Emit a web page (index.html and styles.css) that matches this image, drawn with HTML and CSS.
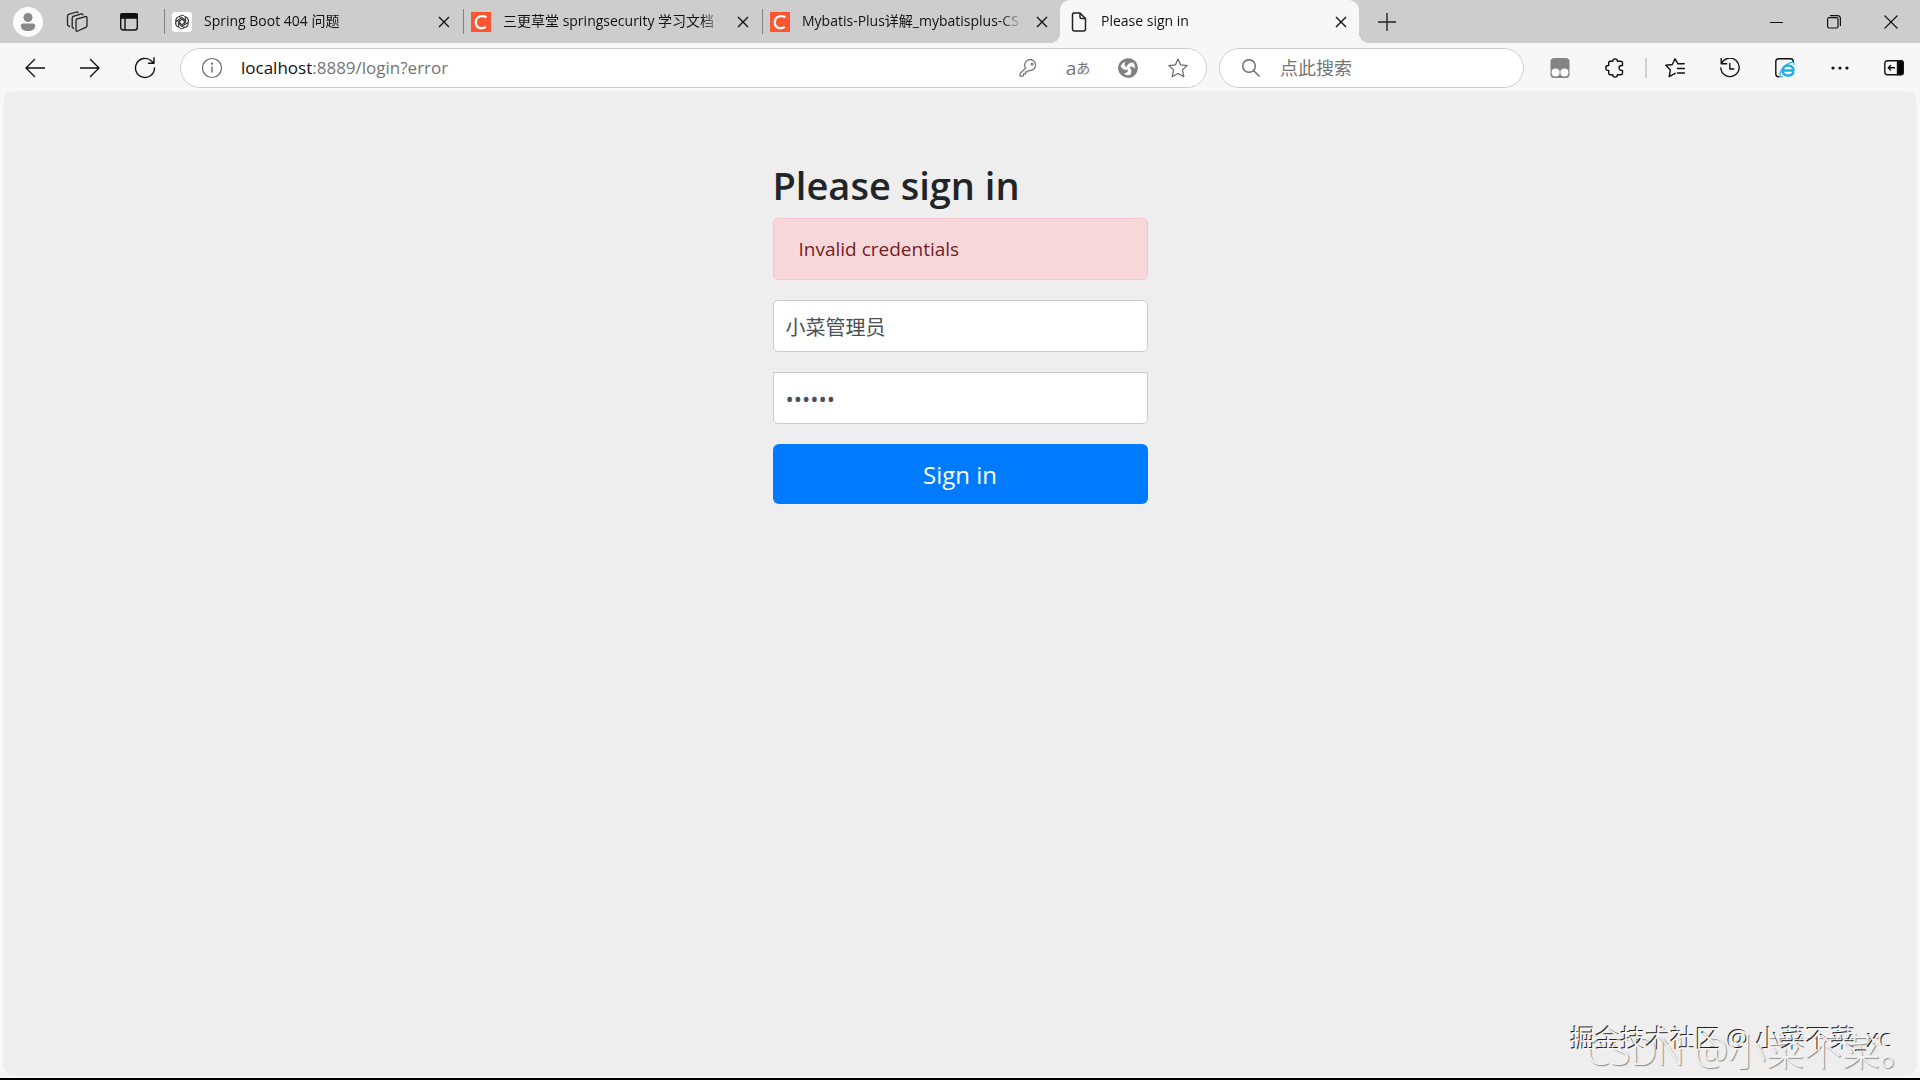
FILE: index.html
```
<!DOCTYPE html>
<html lang="zh-CN">
<head>
    <meta charset="UTF-8">
    <meta name="viewport" content="width=device-width, initial-scale=1.0">
    <title>Please sign in</title>
    <link rel="stylesheet" href="styles.css">
</head>
<body>
    <header class="tab-strip">
        <div class="strip-tools">
            <button class="profile" type="button" aria-label="Profile">
                <svg width="30" height="30" viewBox="0 0 30 30"><circle cx="15" cy="15" r="15" fill="#fbfbfb"/><circle cx="15" cy="10.500" r="4.500" fill="#8a8a8a"/><path d="M10 16.500h10q2.200 0 2.200 2.200c0 3.300-3 5.300-7.200 5.300s-7.200-2-7.200-5.300q0-2.200 2.200-2.200z" fill="#8a8a8a"/></svg>
            </button>
            <button class="strip-button" type="button" aria-label="Workspaces">
                <svg width="22" height="22" viewBox="0 0 22 22" fill="none" stroke="#222" stroke-width="1.300" stroke-linejoin="round" stroke-linecap="round"><path d="M10.500 8.200l9-2.600q1.500-.3 1.500 1.200v8q0 1.200-1.200 1.600l-8 3.600q-1.800.8-1.800-1V9.600q0-1 .5-1.400z"/><path d="M7.500 17.500l-1.300-1.200V7q0-1.200 1-1.600l8.300-2.500q1.200-.3 1.500 1"/><path d="M3.500 15.500L1.500 14V5q0-1.200 1-1.600L10.500 1q1-.3 1.500.6"/></svg>
            </button>
            <button class="strip-button" type="button" aria-label="Tab actions">
                <svg width="20" height="20" viewBox="0 0 20 20" fill="none" stroke="#111" stroke-width="1.400"><rect x="1.700" y="1.700" width="16.600" height="16.300" rx="2.500"/><path d="M2 2h16v4H2z" fill="#111"/><path d="M6 6v12"/></svg>
            </button>
        </div>

        <nav class="tabs" aria-label="Tabs">
            <div class="tab">
                <svg class="favicon" viewBox="0 0 20 20"><rect width="20" height="20" rx="3" fill="#fff"/><g fill="none" stroke="#222"><path id="petal" d="M7.200 5C8.200 2.600 13.200 2.600 13.600 6.300V10.500L9.500 12.800"/><use href="#petal" transform="rotate(60 10 10)"/><use href="#petal" transform="rotate(120 10 10)"/><use href="#petal" transform="rotate(180 10 10)"/><use href="#petal" transform="rotate(240 10 10)"/><use href="#petal" transform="rotate(300 10 10)"/></g></svg>
                <a class="tab-title" href="#">Spring Boot 404 问题</a>
                <button class="tab-close" type="button" aria-label="Close tab"><svg viewBox="0 0 12 12"><path d="M1 1l10 10M11 1L1 11"/></svg></button>
            </div>
            <div class="tab">
                <svg class="favicon" viewBox="0 0 20 20"><rect width="20" height="20" fill="#fc5531"/><path d="M15.500 5.300C12 3.200 4.800 3.500 4.800 10.500c0 6 6 6.800 10 4.600" fill="none" stroke="#fff" stroke-width="2.300"/></svg>
                <a class="tab-title" href="#">三更草堂 springsecurity 学习文档</a>
                <button class="tab-close" type="button" aria-label="Close tab"><svg viewBox="0 0 12 12"><path d="M1 1l10 10M11 1L1 11"/></svg></button>
            </div>
            <div class="tab">
                <svg class="favicon" viewBox="0 0 20 20"><rect width="20" height="20" fill="#fc5531"/><path d="M15.500 5.300C12 3.200 4.800 3.500 4.800 10.500c0 6 6 6.800 10 4.600" fill="none" stroke="#fff" stroke-width="2.300"/></svg>
                <a class="tab-title" href="#">Mybatis-Plus详解_mybatisplus-CS</a>
                <button class="tab-close" type="button" aria-label="Close tab"><svg viewBox="0 0 12 12"><path d="M1 1l10 10M11 1L1 11"/></svg></button>
            </div>
            <div class="tab tab-active">
                <svg class="favicon" viewBox="0 0 20 20"><path d="M4.500 1H11l5.500 5.500V17q0 2-2 2h-9q-2 0-2-2V3q0-2 2-2zM11 1v4q0 1.500 1.500 1.500h4" fill="none" stroke="#222" stroke-width="1.500" stroke-linejoin="round"/></svg>
                <a class="tab-title" href="#">Please sign in</a>
                <button class="tab-close" type="button" aria-label="Close tab"><svg viewBox="0 0 12 12"><path d="M1 1l10 10M11 1L1 11"/></svg></button>
            </div>
        </nav>
        <button class="new-tab" type="button" aria-label="New tab">
            <svg width="18" height="18" viewBox="0 0 18 18" stroke="#222" stroke-width="1.400"><path d="M9 0v18M0 9h18"/></svg>
        </button>

        <div class="window-controls">
            <button class="window-button" type="button" aria-label="Minimize"><svg width="14" height="14" viewBox="0 0 14 14" fill="none" stroke="#111"><path d="M0 7.500h13"/></svg></button>
            <button class="window-button" type="button" aria-label="Restore"><svg width="14" height="14" viewBox="0 0 14 14" fill="none" stroke="#111" stroke-width="1.200"><rect x=".6" y="2.600" width="10.400" height="10.400" rx="1.500"/><path d="M3 .6h7.500q2.900 0 2.900 2.900V11"/></svg></button>
            <button class="window-button" type="button" aria-label="Close"><svg width="14" height="14" viewBox="0 0 14 14" fill="none" stroke="#111" stroke-width="1.100"><path d="M.5.5l13 13M13.500.5l-13 13"/></svg></button>
        </div>
    </header>

    <div class="toolbar">
        <div class="nav-buttons">
            <button class="tool-button" type="button" aria-label="Back"><svg width="20" height="20" viewBox="0 0 20 20"><path d="M20 10H1M9.500 1.500L1 10l8.500 8.500"/></svg></button>
            <button class="tool-button" type="button" aria-label="Forward"><svg width="20" height="20" viewBox="0 0 20 20"><path d="M0 10h19M10.500 1.500L19 10l-8.500 8.500"/></svg></button>
            <button class="tool-button" type="button" aria-label="Reload"><svg width="22" height="22" viewBox="0 0 22 22"><path d="M20.500 11A9.500 9.500 0 1 1 17.500 4l2 2M20 .8V6.300H14.500"/></svg></button>
        </div>

        <div class="address-bar">
            <svg class="info-icon" viewBox="0 0 22 22" fill="none" stroke="#666" stroke-width="1.200"><circle cx="11" cy="11" r="9.500"/><path d="M11 9.500v6" stroke-width="1.400"/><circle cx="11" cy="6.700" r=".5" fill="#666"/></svg>
            <p class="url"><span class="host">localhost</span>:8889/login?error</p>
            <button class="bar-button" type="button" aria-label="Saved passwords"><svg width="18" height="18" viewBox="0 0 18 18" fill="none" stroke="#767676" stroke-width="1.200" stroke-linejoin="round"><path d="M6.600 9.200A5.500 5.500 0 1 1 9.800 11.400L8.300 12.800H6.500v2H4.500v1.700l-.8.700H1V14.500z"/><circle cx="13.200" cy="5" r="1"/></svg></button>
            <button class="bar-button translate" type="button" aria-label="Translate">a<span class="kana">あ</span></button>
            <button class="bar-button" type="button" aria-label="Extension"><svg width="20" height="20" viewBox="0 0 20 20" fill="#808080"><path id="blade" d="M1.800 4.600C5.500-1.200 15-1.600 18.800 5.200 14.500 3.800 9.800 4.300 8.600 9.200 6.300 8 6 5.800 7.500 3.900 5 4.300 3.400 6 2.900 8.600 1.900 7.600 1.500 6.200 1.800 4.600z"/><use href="#blade" transform="rotate(120 10 10)"/><use href="#blade" transform="rotate(240 10 10)"/></svg></button>
            <button class="bar-button" type="button" aria-label="Add to favorites"><svg width="20" height="20" viewBox="0 0 20 20" fill="none" stroke="#666" stroke-width="1.200" stroke-linejoin="round"><path d="M10 1l2.700 5.900 6.500.7-4.800 4.300 1.400 6.800L10 15.500l-5.800 3.200 1.400-6.800L.8 7.600l6.500-.7z"/></svg></button>
        </div>

        <div class="search-bar">
            <svg class="search-icon" viewBox="0 0 18 18" fill="none" stroke="#666" stroke-width="1.400"><circle cx="7" cy="7" r="6.300"/><path d="M11.500 11.500l6 6"/></svg>
            <input class="search-input" type="text" placeholder="点此搜索" aria-label="Search">
        </div>

        <div class="extensions">
            <button class="tool-button" type="button" aria-label="Tampermonkey"><svg width="20" height="20" viewBox="0 0 20 20" class="solid"><rect x=".5" width="19" height="20" rx="3.500" fill="#858585"/><circle cx="5.600" cy="14.600" r="4" fill="#fff"/><circle cx="14.400" cy="14.600" r="4" fill="#fff"/></svg></button>
            <button class="tool-button" type="button" aria-label="Extensions"><svg width="20" height="20" viewBox="0 0 20 20"><path d="M5.200 3.200h2.600a2.300 2.300 0 0 1 4.600 0h3.600q1.500 0 1.500 1.500v2.800h-1a2.400 2.400 0 0 0 0 4.900h1v2.900q0 1.500-1.500 1.500h-3.600a2.300 2.300 0 0 1-4.600 0H5.200q-1.500 0-1.500-1.500v-2.900h-.5a2.400 2.400 0 0 1 0-4.900h.5V4.700q0-1.500 1.500-1.500z"/></svg></button>
        </div>
        <div class="browser-tools">
            <button class="tool-button" type="button" aria-label="Favorites"><svg width="20" height="20" viewBox="0 0 20 20"><path d="M19.200 5.800h-6.200L10 .8 7.300 6.500.8 7.300l4.600 4.600-1.200 6.700 6-3.200M12.500 10.500h7M12.500 15h7"/></svg></button>
            <button class="tool-button" type="button" aria-label="History"><svg width="20" height="20" viewBox="0 0 20 20"><path d="M1.500 5.800A9.200 9.200 0 1 1 .8 10M1.200.5v5.300h5.500M9.800 5.500V11h4"/></svg></button>
            <button class="tool-button" type="button" aria-label="IE mode"><svg width="20" height="20" viewBox="0 0 20 20"><path d="M4 18.800H3.500q-2.700 0-2.700-2.700V3.500Q.8.800 3.500.8h12q2.700 0 2.700 2.700"/><path d="M18.200 14.800c-2 4.200-10.400 3.700-10.400-2.100 0-6.700 10.700-6.900 10.700-.1H9.500" stroke="#23aee5" stroke-width="2.500"/><path d="M7.500 18.800c-4.500 1.500-3-7 3.500-11.800 3.500-2.500 8.500-4.500 8-.5" stroke="#23aee5" stroke-width="1.200"/></svg></button>
            <button class="tool-button" type="button" aria-label="Settings and more"><svg width="18" height="4" viewBox="0 0 18 4" class="solid"><circle cx="2" cy="2" r="1.600"/><circle cx="9" cy="2" r="1.600"/><circle cx="16" cy="2" r="1.600"/></svg></button>
            <button class="tool-button" type="button" aria-label="Sidebar"><svg width="20" height="16" viewBox="0 0 20 16"><rect x=".8" y=".8" width="18.400" height="14" rx="2.500"/><path d="M13.500 1h4q1.500 0 1.500 1.500v10.500q0 1.500-1.500 1.500h-4z" fill="#000"/><path d="M10.500 7.800H4.500M6.500 5.500L4.300 7.800l2.200 2.300"/></svg></button>
        </div>
    </div>

    <main class="page">
        <form class="form-signin">
            <h1 class="form-title">Please sign in</h1>
            <div class="alert" role="alert">Invalid credentials</div>
            <input class="form-control" type="text" name="username" aria-label="Username" value="小菜管理员" required>
            <input class="form-control password" type="password" name="password" aria-label="Password" value="123456" required>
            <button class="btn-primary" type="submit">Sign in</button>
        </form>
    </main>
    <div class="watermark watermark-csdn">CSDN @小菜不菜。</div>
    <div class="watermark watermark-juejin">掘金技术社区 @ 小菜不菜_xc</div>
</body>
</html>
```
FILE: styles.css
```
* {
    box-sizing: border-box;
}

body {
    display: flex;
    flex-direction: column;
    min-height: 100vh;
    margin: 0;
    border-bottom: 2px solid #000;
    background-color: #f7f7f7;
    color: #111;
    font-family: "Open Sans", "Noto Sans CJK SC", sans-serif;
    font-size: 14px;
}

button {
    display: flex;
    justify-content: center;
    align-items: center;
    padding: 0;
    border: none;
    background: none;
    font-family: inherit;
    cursor: pointer;
}

svg {
    display: block;
    flex-shrink: 0;
}

/* tab strip */

.tab-strip {
    display: flex;
    height: 43px;
    background-color: #cdcdcd;
}

.strip-tools {
    display: flex;
    align-items: center;
    width: 163px;
    padding-left: 13px;
}

.profile {
    width: 30px;
    margin-right: 8px;
}

.strip-button {
    width: 52px;
    height: 40px;
}

.tabs {
    display: flex;
    min-width: 0;
}

.tab {
    position: relative;
    display: flex;
    align-items: center;
    width: 299px;
    padding: 0 6px 0 9px;
}

.tab:not(.tab-active)::before {
    content: "";
    position: absolute;
    left: 1px;
    top: 9px;
    width: 1px;
    height: 25px;
    background-color: #808080;
}

.tab-active {
    border-radius: 10px 10px 0 0;
    background-color: #f7f7f7;
}

/* flared feet of the active tab */
.tab-active::before,
.tab-active::after {
    content: "";
    position: absolute;
    bottom: 0;
    width: 10px;
    height: 10px;
}

.tab-active::before {
    right: 100%;
    background: radial-gradient(circle at 0 0, transparent 10px, #f7f7f7 10px);
}

.tab-active::after {
    left: 100%;
    background: radial-gradient(circle at 100% 0, transparent 10px, #f7f7f7 10px);
}

.favicon {
    width: 20px;
    height: 20px;
}

.tab-title {
    flex: 1;
    margin: 0 6px 2px 12px;
    overflow: hidden;
    color: #111;
    line-height: 24px;
    text-decoration: none;
    white-space: nowrap;
    -webkit-mask-image: linear-gradient(to left, transparent, #000 24px);
    mask-image: linear-gradient(to left, transparent, #000 24px);
}

.tab-close {
    width: 24px;
    height: 24px;
}

.tab-close svg {
    width: 12px;
    height: 12px;
    stroke: #111;
    stroke-width: 1.4;
}

.new-tab {
    width: 56px;
}

.window-controls {
    display: flex;
    margin: 0 1px 0 auto;
}

.window-button {
    width: 57px;
}

/* toolbar */

.toolbar {
    display: flex;
    align-items: center;
    height: 49px;
    padding-left: 7px;
}

.nav-buttons,
.extensions,
.browser-tools {
    display: flex;
    align-items: center;
}

.tool-button {
    width: 55px;
    height: 40px;
}

.browser-tools .tool-button:last-child {
    width: 53px;
}

.tool-button svg {
    fill: none;
    stroke: #111;
    stroke-width: 1.4;
    stroke-linejoin: round;
    stroke-linecap: round;
}

.tool-button .solid {
    fill: #111;
    stroke: none;
}

.address-bar,
.search-bar {
    display: flex;
    align-items: center;
    height: 40px;
    border: 1px solid #cfcfcf;
    border-radius: 20px;
    background-color: #fff;
}

.address-bar {
    flex: 1;
    margin: 0 12px 0 8px;
    padding: 0 3px 0 20px;
}

.info-icon {
    width: 22px;
    height: 22px;
}

.url {
    flex: 1;
    margin: 0 0 0 18px;
    color: #757575;
    font-size: 17px;
}

.host {
    color: #111;
}

.bar-button {
    width: 50px;
    height: 36px;
}

.translate {
    color: #767676;
    font-size: 19px;
    line-height: 20px;
}

.kana {
    font-size: 14px;
}

.search-bar {
    width: 305px;
    margin-right: 8px;
    padding: 0 20px 0 22px;
}

.search-icon {
    width: 18px;
    height: 18px;
}

.search-input {
    flex: 1;
    min-width: 0;
    margin-left: 20px;
    padding: 0;
    border: none;
    outline: none;
    background: none;
    font-family: inherit;
    font-size: 18px;
}

.search-input::placeholder {
    color: #757575;
}

.extensions {
    margin-right: 3px;
}

.browser-tools::before {
    content: "";
    width: 2px;
    height: 20px;
    background-color: #cfcfcf;
}

/* page */

.page {
    flex: 1;
    margin: 0 4px 3px;
    padding: 69px 20px 20px;
    border-radius: 10px;
    background-color: #eee;
    box-shadow: 0 0 2px rgba(0, 0, 0, 0.1);
}

.form-signin {
    display: flex;
    flex-direction: column;
    max-width: 375px;
    margin: 0 auto;
}

.form-title {
    margin: 0 0 9px;
    color: #212529;
    font-size: 38px;
    font-weight: 600;
    line-height: 48px;
}

.alert {
    margin-bottom: 20px;
    padding: 15px 25px;
    border: 1px solid #f5c6cb;
    border-radius: 5px;
    background-color: #f8d7da;
    color: #721c24;
    font-size: 19px;
    line-height: 30px;
}

.form-control {
    width: 100%;
    height: 52px;
    margin-bottom: 20px;
    padding: 0 12px;
    border: 1px solid #c8ccd0;
    border-radius: 5px;
    background-color: #fff;
    color: #495057;
    font-family: inherit;
    font-size: 20px;
}

.password {
    border-top-left-radius: 0;
    border-top-right-radius: 0;
    font-size: 22px;
}

.btn-primary {
    height: 60px;
    border-radius: 6px;
    background-color: #007bff;
    color: #fff;
    font-size: 24px;
}

/* watermarks */

.watermark {
    position: absolute;
    color: #f2f2f2;
    white-space: nowrap;
    pointer-events: none;
}

.watermark-csdn {
    right: 2px;
    bottom: 8px;
    font-size: 38px;
    font-weight: 300;
    line-height: 44px;
    text-shadow: 1px 1px 1px #888;
}

.watermark-juejin {
    right: 28px;
    bottom: 24px;
    font-size: 25px;
    line-height: 36px;
    text-shadow: -1px -1px 0 #222;
}
```
